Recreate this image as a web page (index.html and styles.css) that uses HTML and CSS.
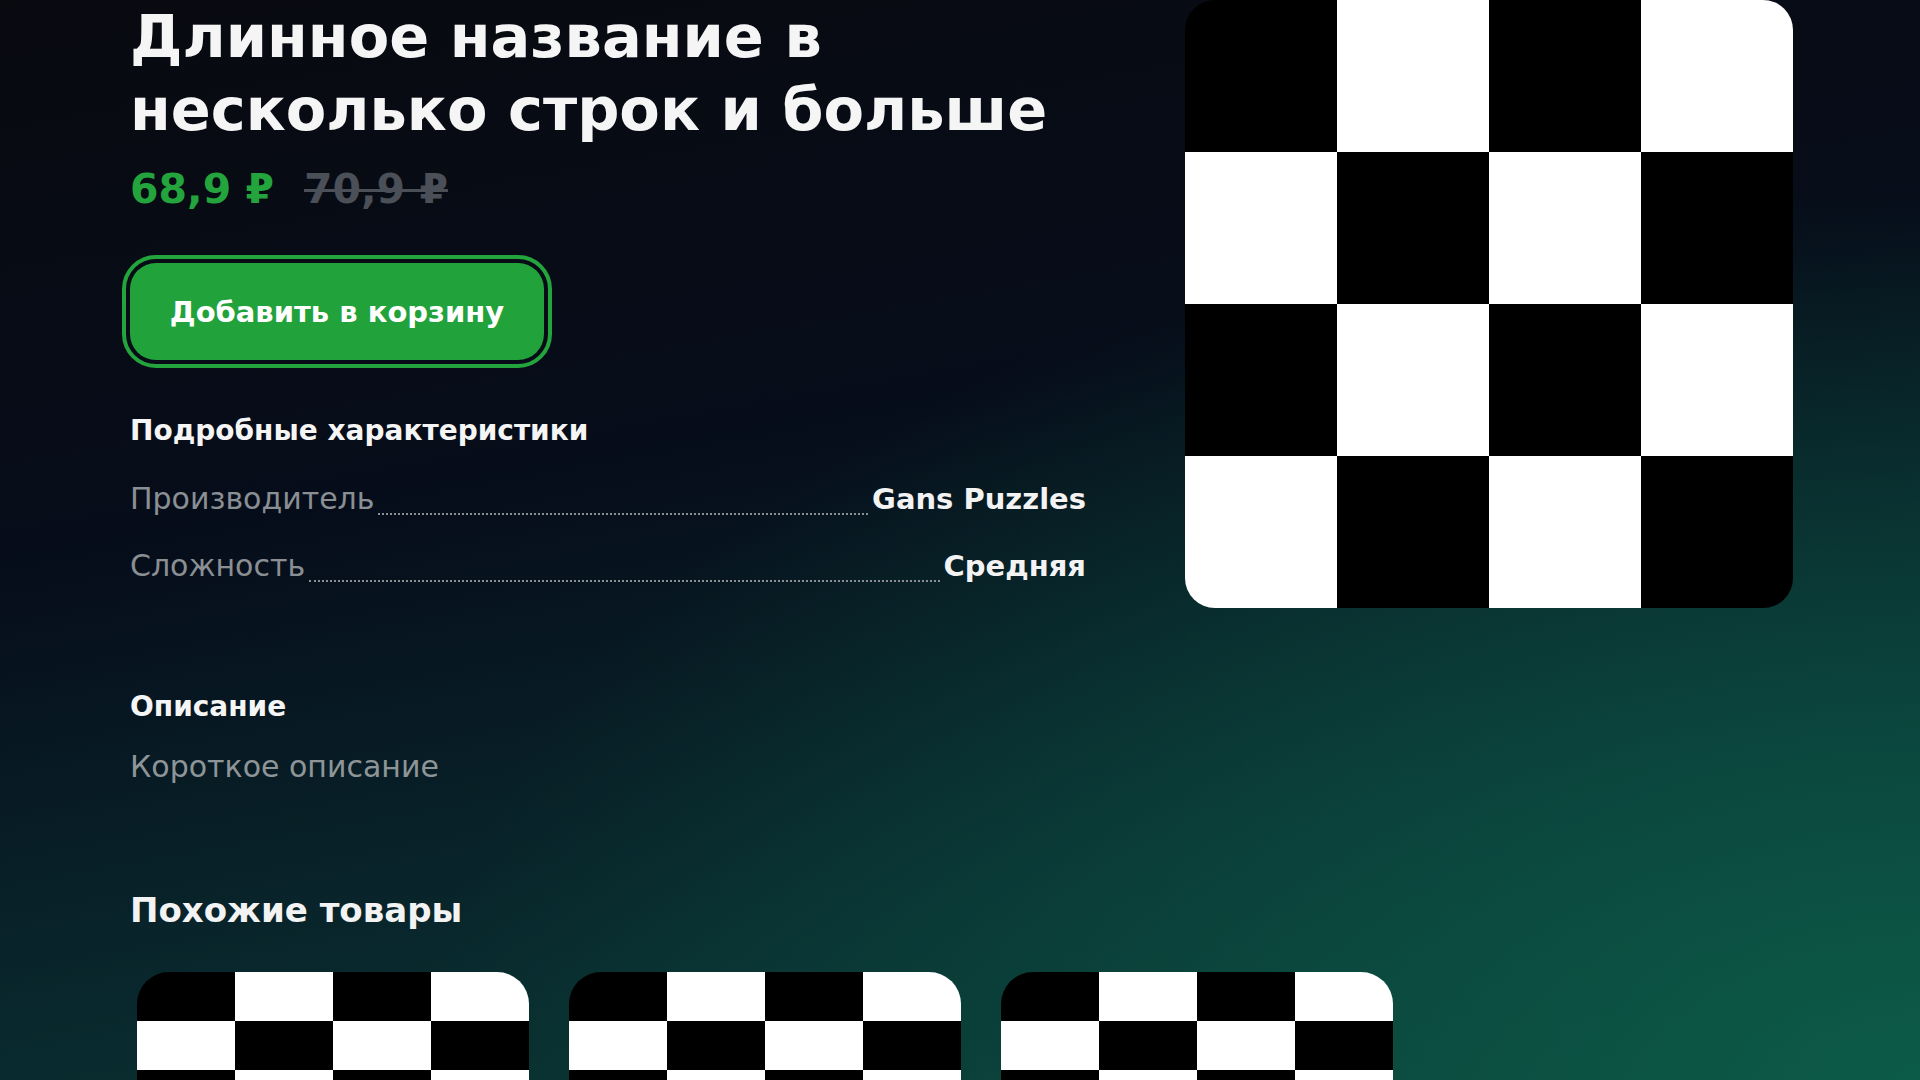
FILE: index.html
```html
<!DOCTYPE html>
<html lang="ru">
<head>
<meta charset="utf-8">
<title>Товар</title>
<link rel="stylesheet" href="styles.css">
</head>
<body>
<div class="page">
  <div class="product">
    <div class="info">
      <h1 class="title">Длинное название в несколько строк и больше</h1>
      <div class="prices">
        <span class="price">68,9 ₽</span>
        <span class="old-price">70,9 ₽</span>
      </div>
      <button class="cart-btn">Добавить в корзину</button>
      <h2 class="section-title specs-title">Подробные характеристики</h2>
      <div class="spec-row">
        <span class="spec-name">Производитель</span>
        <span class="spec-dots"></span>
        <span class="spec-value">Gans Puzzles</span>
      </div>
      <div class="spec-row">
        <span class="spec-name">Сложность</span>
        <span class="spec-dots"></span>
        <span class="spec-value">Средняя</span>
      </div>
      <h2 class="section-title desc-title">Описание</h2>
      <p class="desc">Короткое описание</p>
    </div>
    <div class="cover checker-big"></div>
  </div>
  <h2 class="similar-title">Похожие товары</h2>
  <div class="cards">
    <div class="card checker-small"></div>
    <div class="card checker-small"></div>
    <div class="card checker-small"></div>
  </div>
</div>
</body>
</html>
```
FILE: styles.css
```css
* { box-sizing: border-box; }
html, body {
  margin: 0;
  width: 1920px;
  height: 1080px;
  overflow: hidden;
}
body {
  font-family: "DejaVu Sans", sans-serif;
  color: #f4f4f4;
  background:
    radial-gradient(ellipse 1500px 900px at 100% 100%, rgba(13, 96, 76, 0.85) 0%, rgba(13, 90, 72, 0) 100%),
    linear-gradient(170deg, #090a10 0%, #060d1a 40%, #092a2e 75%, #0a3a34 100%);
}
.page {
  padding-left: 130px;
}
.product {
  display: flex;
  gap: 99px;
  align-items: flex-start;
}
.info {
  width: 956px;
  display: flex;
  flex-direction: column;
  align-items: flex-start;
}
.title {
  margin: 0;
  font-size: 59px;
  line-height: 73px;
  font-weight: 700;
  width: 950px;
  color: #f5f5f5;
}
.prices {
  display: flex;
  gap: 30px;
  margin-top: 18px;
  font-size: 41px;
  line-height: 50px;
  font-weight: 700;
}
.price { color: #23a43c; }
.old-price {
  color: #4b4f57;
  text-decoration: line-through;
  text-decoration-thickness: 3px;
}
.cart-btn {
  margin: 49px 0 0 0;
  width: 414px;
  height: 97px;
  border: none;
  border-radius: 26px;
  background: #22a23b;
  color: #ffffff;
  font-family: "DejaVu Sans", sans-serif;
  font-size: 29px;
  font-weight: 700;
  outline: 4px solid #23a43c;
  outline-offset: 4px;
  cursor: pointer;
}
.section-title {
  margin: 0;
  font-size: 28px;
  line-height: 36px;
  font-weight: 700;
  color: #f5f5f5;
}
.specs-title { margin-top: 53px; }
.spec-row {
  width: 100%;
  display: flex;
  align-items: baseline;
  font-size: 30px;
  line-height: 36px;
  margin-top: 32px;
}
.spec-row + .spec-row { margin-top: 31px; }
.spec-name { color: #8a8f94; }
.spec-dots {
  flex: 1;
  margin: 0 4px;
  border-bottom: 2px dotted #8a8f94;
  transform: translateY(6px);
}
.spec-value {
  font-weight: 700;
  font-size: 29px;
  color: #f3f3f3;
}
.desc-title { margin-top: 105px; }
.desc {
  margin: 24px 0 0 0;
  font-size: 30px;
  line-height: 36px;
  color: #8e9598;
}
.cover {
  width: 608px;
  height: 608px;
  border-radius: 30px;
  flex: none;
}
.checker-big {
  background: repeating-conic-gradient(#fff 0 25%, #000 0 50%) 0 0 / 304px 304px;
}
.similar-title {
  margin: 103px 0 0 0;
  font-size: 34px;
  line-height: 44px;
  font-weight: 700;
  color: #f3f3f3;
}
.cards {
  display: flex;
  gap: 40px;
  margin-top: 40px;
  padding-left: 7px;
}
.card {
  width: 392px;
  height: 196px;
  border-radius: 32px;
}
.checker-small {
  background: repeating-conic-gradient(#fff 0 25%, #000 0 50%) 0 0 / 196px 98px;
}
```
